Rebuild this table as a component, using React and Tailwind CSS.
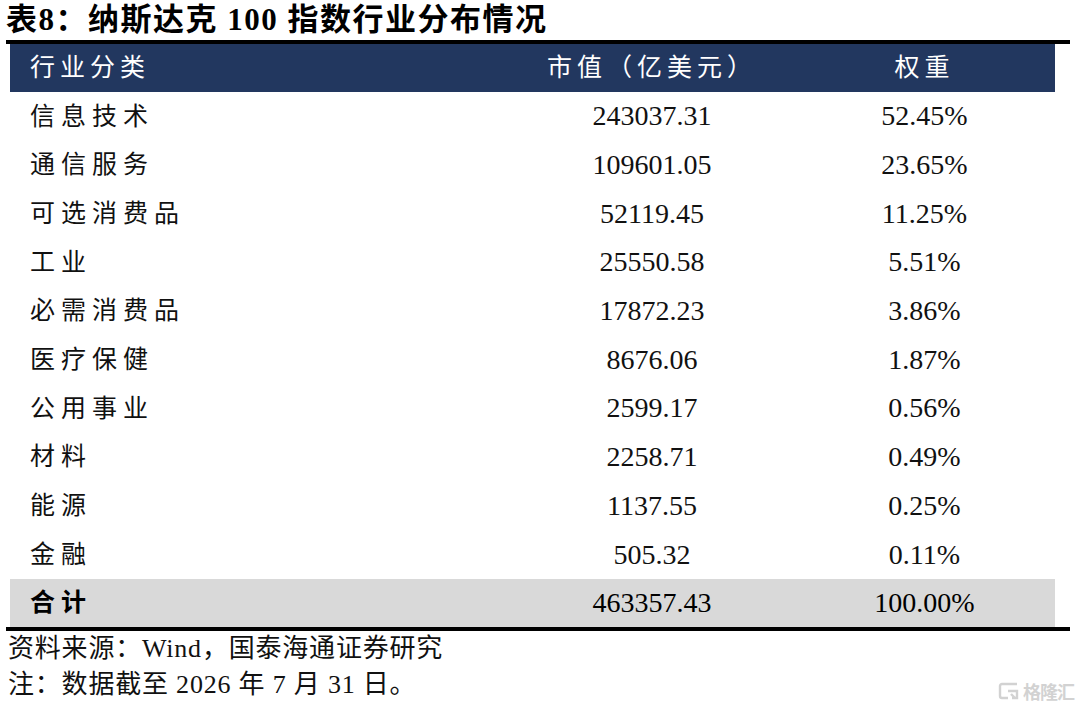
const ROWS = [
  { name: "信息技术", value: "243037.31", weight: "52.45%" },
  { name: "通信服务", value: "109601.05", weight: "23.65%" },
  { name: "可选消费品", value: "52119.45", weight: "11.25%" },
  { name: "工业", value: "25550.58", weight: "5.51%" },
  { name: "必需消费品", value: "17872.23", weight: "3.86%" },
  { name: "医疗保健", value: "8676.06", weight: "1.87%" },
  { name: "公用事业", value: "2599.17", weight: "0.56%" },
  { name: "材料", value: "2258.71", weight: "0.49%" },
  { name: "能源", value: "1137.55", weight: "0.25%" },
  { name: "金融", value: "505.32", weight: "0.11%" },
];

function Watermark() {
  return (
    <div className="absolute right-[6px] bottom-[6px] flex items-center gap-[3px] text-[#d2d2d2]">
      <svg width="22" height="20" viewBox="0 0 22 20" fill="none">
        <path
          d="M19 3 H4 a2 2 0 0 0 -2 2 v10 a2 2 0 0 0 2 2 h6"
          stroke="#d2d2d2"
          strokeWidth="2.4"
        />
        <path d="M10 10 h9 v7 h-5" stroke="#d2d2d2" strokeWidth="2.4" />
        <path d="M13 13 l4 4" stroke="#d2d2d2" strokeWidth="2.4" />
      </svg>
      <span className="text-[18px] leading-none font-bold tracking-[-1px] font-['Noto_Sans_CJK_SC',sans-serif]">
        格隆汇
      </span>
    </div>
  );
}

export default function App() {
  return (
    <div className="relative w-[1080px] h-[707px] bg-white text-[#111] font-['Liberation_Serif','Noto_Sans_CJK_SC',serif]">
      <div className="h-[40px] pl-[6px] flex items-center text-[31px] font-bold tracking-[1.5px] text-black">
        表8：纳斯达克 100 指数行业分布情况
      </div>
      <div className="ml-[6px] w-[1064px] h-[4px] bg-black" />

      <div className="ml-[10px] w-[1045px]">
        <div className="grid grid-cols-[500px_284px_261px] h-[48px] items-center bg-[#22375f] text-white text-[25px] tracking-[5px]">
          <div className="pl-[20px]">行业分类</div>
          <div className="text-center">市值（亿美元）</div>
          <div className="text-center">权重</div>
        </div>

        {ROWS.map((row) => (
          <div
            key={row.name}
            className="grid grid-cols-[500px_284px_261px] h-[48.7px] items-center"
          >
            <div className="pl-[20px] text-[25px] tracking-[6px]">{row.name}</div>
            <div className="text-center text-[28px]">{row.value}</div>
            <div className="text-center text-[28px]">{row.weight}</div>
          </div>
        ))}

        <div className="grid grid-cols-[500px_284px_261px] h-[48px] items-center bg-[#d9d9d9] font-bold text-black">
          <div className="pl-[20px] text-[25px] tracking-[6px]">合计</div>
          <div className="text-center text-[28px] font-normal">463357.43</div>
          <div className="text-center text-[28px] font-normal">100.00%</div>
        </div>
      </div>
      <div className="ml-[6px] w-[1064px] h-[4px] bg-black" />

      <div className="pl-[8px] text-[26px] tracking-[0.8px] text-[#111]">
        <div className="h-[36px] flex items-center">资料来源：Wind，国泰海通证券研究</div>
        <div className="h-[36px] flex items-center">注：数据截至 2026 年 7 月 31 日。</div>
      </div>

      <Watermark />
    </div>
  );
}
